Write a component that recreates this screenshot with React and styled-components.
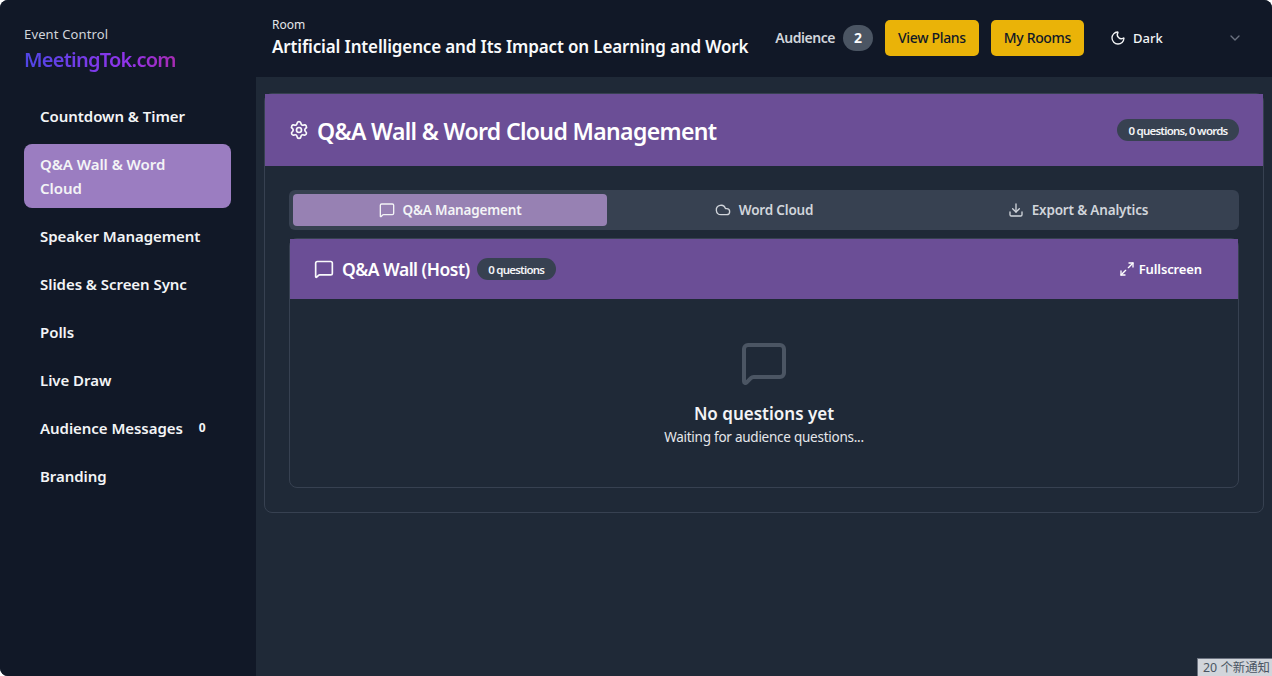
import React from "react";
import styled, { createGlobalStyle } from "styled-components";
import { ChevronDown, Cloud, Download, Maximize2, MessageSquare, Moon, Settings } from "lucide-react";

const NAV_ITEMS = [
  { label: "Countdown & Timer" },
  { label: "Q&A Wall & Word Cloud", active: true },
  { label: "Speaker Management" },
  { label: "Slides & Screen Sync" },
  { label: "Polls" },
  { label: "Live Draw" },
  { label: "Audience Messages", badge: 0 },
  { label: "Branding" },
];

const TABS = [
  { label: "Q&A Management", icon: MessageSquare, active: true },
  { label: "Word Cloud", icon: Cloud },
  { label: "Export & Analytics", icon: Download },
];

export default function App() {
  return (
    <>
      <GlobalStyle />
      <Page>
        <Sidebar>
          <Brand>
            <BrandLabel>Event Control</BrandLabel>
            <BrandName>MeetingTok.com</BrandName>
          </Brand>
          <Nav>
            {NAV_ITEMS.map((item) => (
              <NavItem key={item.label} $active={item.active}>
                <span>{item.label}</span>
                {item.badge !== undefined && <NavBadge>{item.badge}</NavBadge>}
              </NavItem>
            ))}
          </Nav>
        </Sidebar>

        <Content>
          <Header>
            <RoomInfo>
              <RoomLabel>Room</RoomLabel>
              <RoomTitle>Artificial Intelligence and Its Impact on Learning and Work</RoomTitle>
            </RoomInfo>
            <Audience>
              <AudienceLabel>Audience</AudienceLabel>
              <AudienceCount>2</AudienceCount>
            </Audience>
            <YellowButton>View Plans</YellowButton>
            <YellowButton>My Rooms</YellowButton>
            <ThemeSelect>
              <Moon size={16} strokeWidth={2} />
              <ThemeName>Dark</ThemeName>
              <ThemeChevron size={16} />
            </ThemeSelect>
          </Header>

          <Main>
            <Card>
              <CardHeader>
                <CardTitle>
                  <Settings size={20} strokeWidth={2} />
                  <h1>Q&amp;A Wall &amp; Word Cloud Management</h1>
                </CardTitle>
                <Pill>0 questions, 0 words</Pill>
              </CardHeader>

              <CardBody>
                <Tabs>
                  {TABS.map(({ label, icon: Icon, active }) => (
                    <Tab key={label} $active={active}>
                      <Icon size={16} strokeWidth={2} />
                      {label}
                    </Tab>
                  ))}
                </Tabs>

                <WallCard>
                  <WallHeader>
                    <WallTitle>
                      <MessageSquare size={20} strokeWidth={2} />
                      <h2>Q&amp;A Wall (Host)</h2>
                      <Pill>0 questions</Pill>
                    </WallTitle>
                    <FullscreenButton>
                      <Maximize2 size={16} strokeWidth={2} />
                      Fullscreen
                    </FullscreenButton>
                  </WallHeader>
                  <EmptyState>
                    <EmptyIcon size={48} strokeWidth={2} />
                    <EmptyTitle>No questions yet</EmptyTitle>
                    <EmptyText>Waiting for audience questions...</EmptyText>
                  </EmptyState>
                </WallCard>
              </CardBody>
            </Card>
          </Main>
        </Content>

        <StatusTip>20 个新通知</StatusTip>
      </Page>
    </>
  );
}

const GlobalStyle = createGlobalStyle`
  html, body {
    margin: 0;
    height: 100%;
    background: #ffffff;
  }

  body {
    font-family: "Noto Sans", "Noto Sans CJK SC", sans-serif;
    overflow: hidden;
  }

  * {
    box-sizing: border-box;
  }

  h1, h2 {
    margin: 0;
  }
`;

const Page = styled.div`
  position: relative;
  display: flex;
  width: 1272px;
  height: 676px;
  overflow: hidden;
  border-radius: 8px 8px 0 8px;
  background: #1f2937;
  color: #f9fafb;
`;

const Sidebar = styled.aside`
  flex: 0 0 256px;
  padding: 24px 25px 24px 24px;
  background: #111827;
`;

const Brand = styled.div`
  height: 72px;
`;

const BrandLabel = styled.div`
  font-size: 13px;
  line-height: 20px;
  letter-spacing: 0.15px;
  color: #d1d5db;
`;

const BrandName = styled.div`
  width: max-content;
  font-size: 20px;
  font-weight: 600;
  line-height: 32px;
  letter-spacing: -0.75px;
  background: linear-gradient(90deg, #4f46e5, #9333ea 70%, #a62bb0);
  -webkit-background-clip: text;
  background-clip: text;
  color: transparent;
`;

const Nav = styled.nav`
  display: flex;
  flex-direction: column;
`;

const NavItem = styled.div`
  display: flex;
  align-items: center;
  gap: 16px;
  padding: 8px 24px 8px 16px;
  border-radius: 8px;
  font-size: 15px;
  font-weight: 600;
  line-height: 24px;
  letter-spacing: -0.05px;
  color: #f3f4f6;
  background: ${(p) => (p.$active ? "#9b7dc1" : "transparent")};
  margin-bottom: 8px;
  min-height: 40px;
`;

const NavBadge = styled.span`
  font-size: 12px;
  font-weight: 700;
  line-height: 16px;
  color: #f3f4f6;
`;

const Content = styled.div`
  flex: 1;
  display: flex;
  flex-direction: column;
  min-width: 0;
`;

const Header = styled.header`
  display: flex;
  align-items: center;
  height: 77px;
  padding: 0 29px 0 16px;
  background: #111827;
`;

const RoomInfo = styled.div`
  flex: 1;
  min-width: 0;
  padding-top: 1px;
`;

const RoomLabel = styled.div`
  font-size: 12px;
  line-height: 16px;
  color: #e5e7eb;
`;

const RoomTitle = styled.div`
  font-size: 17px;
  font-weight: 600;
  line-height: 28px;
  letter-spacing: -0.15px;
  white-space: nowrap;
  color: #f9fafb;
`;

const Audience = styled.div`
  display: flex;
  align-items: center;
  gap: 8px;
  margin-right: 12px;
  margin-bottom: 2px;
`;

const AudienceLabel = styled.span`
  font-size: 14px;
  font-weight: 600;
  letter-spacing: -0.45px;
  color: #d1d5db;
`;

const AudienceCount = styled.span`
  display: flex;
  align-items: center;
  justify-content: center;
  width: 30px;
  height: 26px;
  border-radius: 13px;
  background: #4b5563;
  font-size: 14px;
  font-weight: 700;
  color: #f9fafb;
`;

const YellowButton = styled.button`
  height: 36px;
  padding: 0 13px;
  margin-right: 12px;
  margin-bottom: 2px;
  border: none;
  border-radius: 5px;
  background: #eab308;
  font-family: inherit;
  font-size: 14px;
  font-weight: 500;
  letter-spacing: -0.33px;
  color: #111827;
`;

const ThemeSelect = styled.div`
  display: flex;
  align-items: center;
  width: 147px;
  padding-left: 14px;
  margin-bottom: 2px;
  color: #f3f4f6;
`;

const ThemeName = styled.span`
  flex: 1;
  margin-left: 7px;
  font-size: 13px;
  font-weight: 500;
`;

const ThemeChevron = styled(ChevronDown)`
  color: #6b7280;
`;

const Main = styled.main`
  flex: 1;
  padding: 16px 8px;
`;

const Card = styled.section`
  border: 1px solid #374151;
  border-radius: 8px;
`;

const CardHeader = styled.div`
  display: flex;
  align-items: center;
  justify-content: space-between;
  height: 72px;
  padding: 0 24px;
  background: #6b4e96;
`;

const CardTitle = styled.div`
  display: flex;
  align-items: center;
  gap: 8px;

  h1 {
    padding-top: 2px;
    font-size: 23px;
    font-weight: 600;
    line-height: 34px;
    letter-spacing: -0.64px;
    color: #ffffff;
  }
`;

const Pill = styled.span`
  display: inline-flex;
  align-items: center;
  height: 22px;
  padding: 0 11.5px;
  border-radius: 11px;
  background: #374151;
  font-size: 11.5px;
  font-weight: 600;
  letter-spacing: -0.78px;
  color: #f3f4f6;
`;

const CardBody = styled.div`
  padding: 24px;
`;

const Tabs = styled.div`
  display: grid;
  grid-template-columns: repeat(3, 1fr);
  gap: 0;
  height: 40px;
  padding: 4px;
  border-radius: 6px;
  background: #374151;
`;

const Tab = styled.div`
  display: flex;
  align-items: center;
  justify-content: center;
  gap: 8px;
  border-radius: 4px;
  background: ${(p) => (p.$active ? "#9781b3" : "transparent")};
  font-size: 13.5px;
  font-weight: 600;
  letter-spacing: -0.18px;
  color: ${(p) => (p.$active ? "#f3f4f6" : "#d1d5db")};
`;

const WallCard = styled.div`
  margin-top: 8px;
  height: 250px;
  border: 1px solid #374151;
  border-radius: 8px;
`;

const WallHeader = styled.div`
  display: flex;
  align-items: center;
  justify-content: space-between;
  height: 60px;
  padding: 0 24px;
  background: #6b4e96;
`;

const WallTitle = styled.div`
  display: flex;
  align-items: center;
  gap: 7px;

  h2 {
    font-size: 17.5px;
    font-weight: 600;
    line-height: 28px;
    letter-spacing: -0.5px;
    color: #ffffff;
  }

  svg {
    margin-right: 1px;
  }
`;

const FullscreenButton = styled.div`
  display: flex;
  align-items: center;
  gap: 4px;
  padding-right: 12px;
  font-size: 13px;
  font-weight: 600;
  letter-spacing: -0.12px;
  color: #ffffff;
`;

const EmptyState = styled.div`
  display: flex;
  flex-direction: column;
  align-items: center;
  padding-top: 40px;
`;

const EmptyIcon = styled(MessageSquare)`
  color: #4b5563;
`;

const EmptyTitle = styled.div`
  margin-top: 15px;
  font-size: 17px;
  font-weight: 600;
  line-height: 24px;
  color: #f3f4f6;
`;

const EmptyText = styled.div`
  font-size: 13.5px;
  line-height: 22px;
  letter-spacing: -0.25px;
  color: #e5e7eb;
`;

const StatusTip = styled.div`
  position: absolute;
  right: 0;
  bottom: 0;
  height: 18px;
  padding: 0 2px 0 5px;
  border-top: 1px solid #6b7280;
  border-left: 1px solid #6b7280;
  background: #d1d5db;
  font-size: 12.4px;
  line-height: 17px;
  white-space: nowrap;
  color: #4b5563;
`;
